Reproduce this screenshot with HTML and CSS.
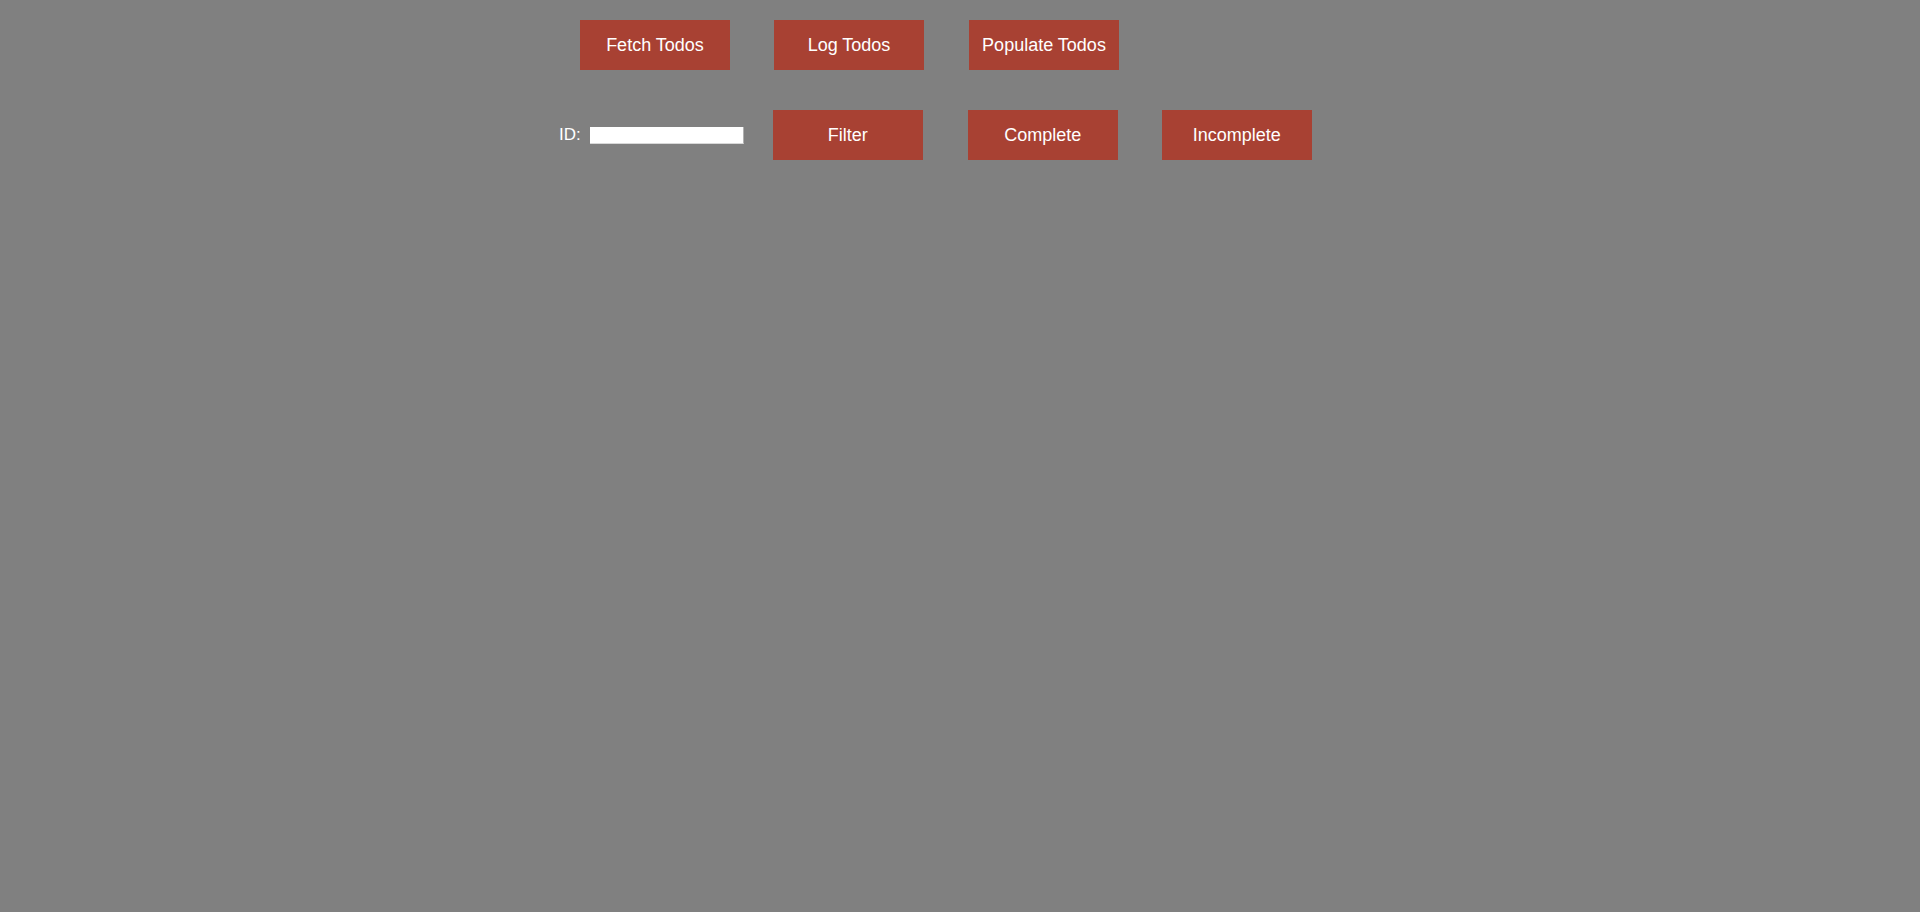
FILE: index.html
```html
<!DOCTYPE html>
<html lang="en">
<head>
<meta charset="utf-8">
<title>Todos</title>
<link rel="stylesheet" href="styles.css">
</head>
<body>
<main class="app">
  <div class="row row-top">
    <button class="btn" type="button">Fetch Todos</button>
    <button class="btn" type="button">Log Todos</button>
    <button class="btn btn-wide-gap" type="button">Populate Todos</button>
  </div>
  <div class="row row-filter">
    <label class="field">
      <span class="field-label">ID:</span>
      <input class="field-input" type="text">
    </label>
    <button class="btn" type="button">Filter</button>
    <button class="btn btn-wide-gap" type="button">Complete</button>
    <button class="btn" type="button">Incomplete</button>
  </div>
</main>
</body>
</html>
```

FILE: styles.css
```css
html, body {
  margin: 0;
  padding: 0;
  height: 100%;
}

body {
  background: #808080;
  font-family: "Liberation Sans", Arial, sans-serif;
  font-size: 17px;
  color: #ffffff;
}

.app {
  display: flex;
  flex-direction: column;
  gap: 40px;
  padding-top: 20px;
}

.row {
  display: flex;
  align-items: center;
}

.row-top {
  padding-left: 580px;
}

.row-filter {
  padding-left: 559px;
}

.btn {
  width: 150px;
  height: 50px;
  margin: 0;
  padding: 0;
  border: none;
  background: #a84133;
  color: #ffffff;
  font-family: inherit;
  font-size: 18px;
  cursor: pointer;
}

.btn + .btn {
  margin-left: 44px;
}

.btn + .btn-wide-gap {
  margin-left: 45px;
}

.field {
  display: flex;
  align-items: center;
  gap: 9px;
  margin-right: 29px;
}

.field-label {
  font-size: 17px;
  line-height: 20px;
}

.field-input {
  box-sizing: border-box;
  width: 154px;
  height: 17px;
  margin: 0;
  padding: 0 2px;
  border: none;
  border-right: 1px solid #b0b0b0;
  border-bottom: 1px solid #d8d8d8;
  background: #ffffff;
  font-family: inherit;
  font-size: 13px;
}
```
